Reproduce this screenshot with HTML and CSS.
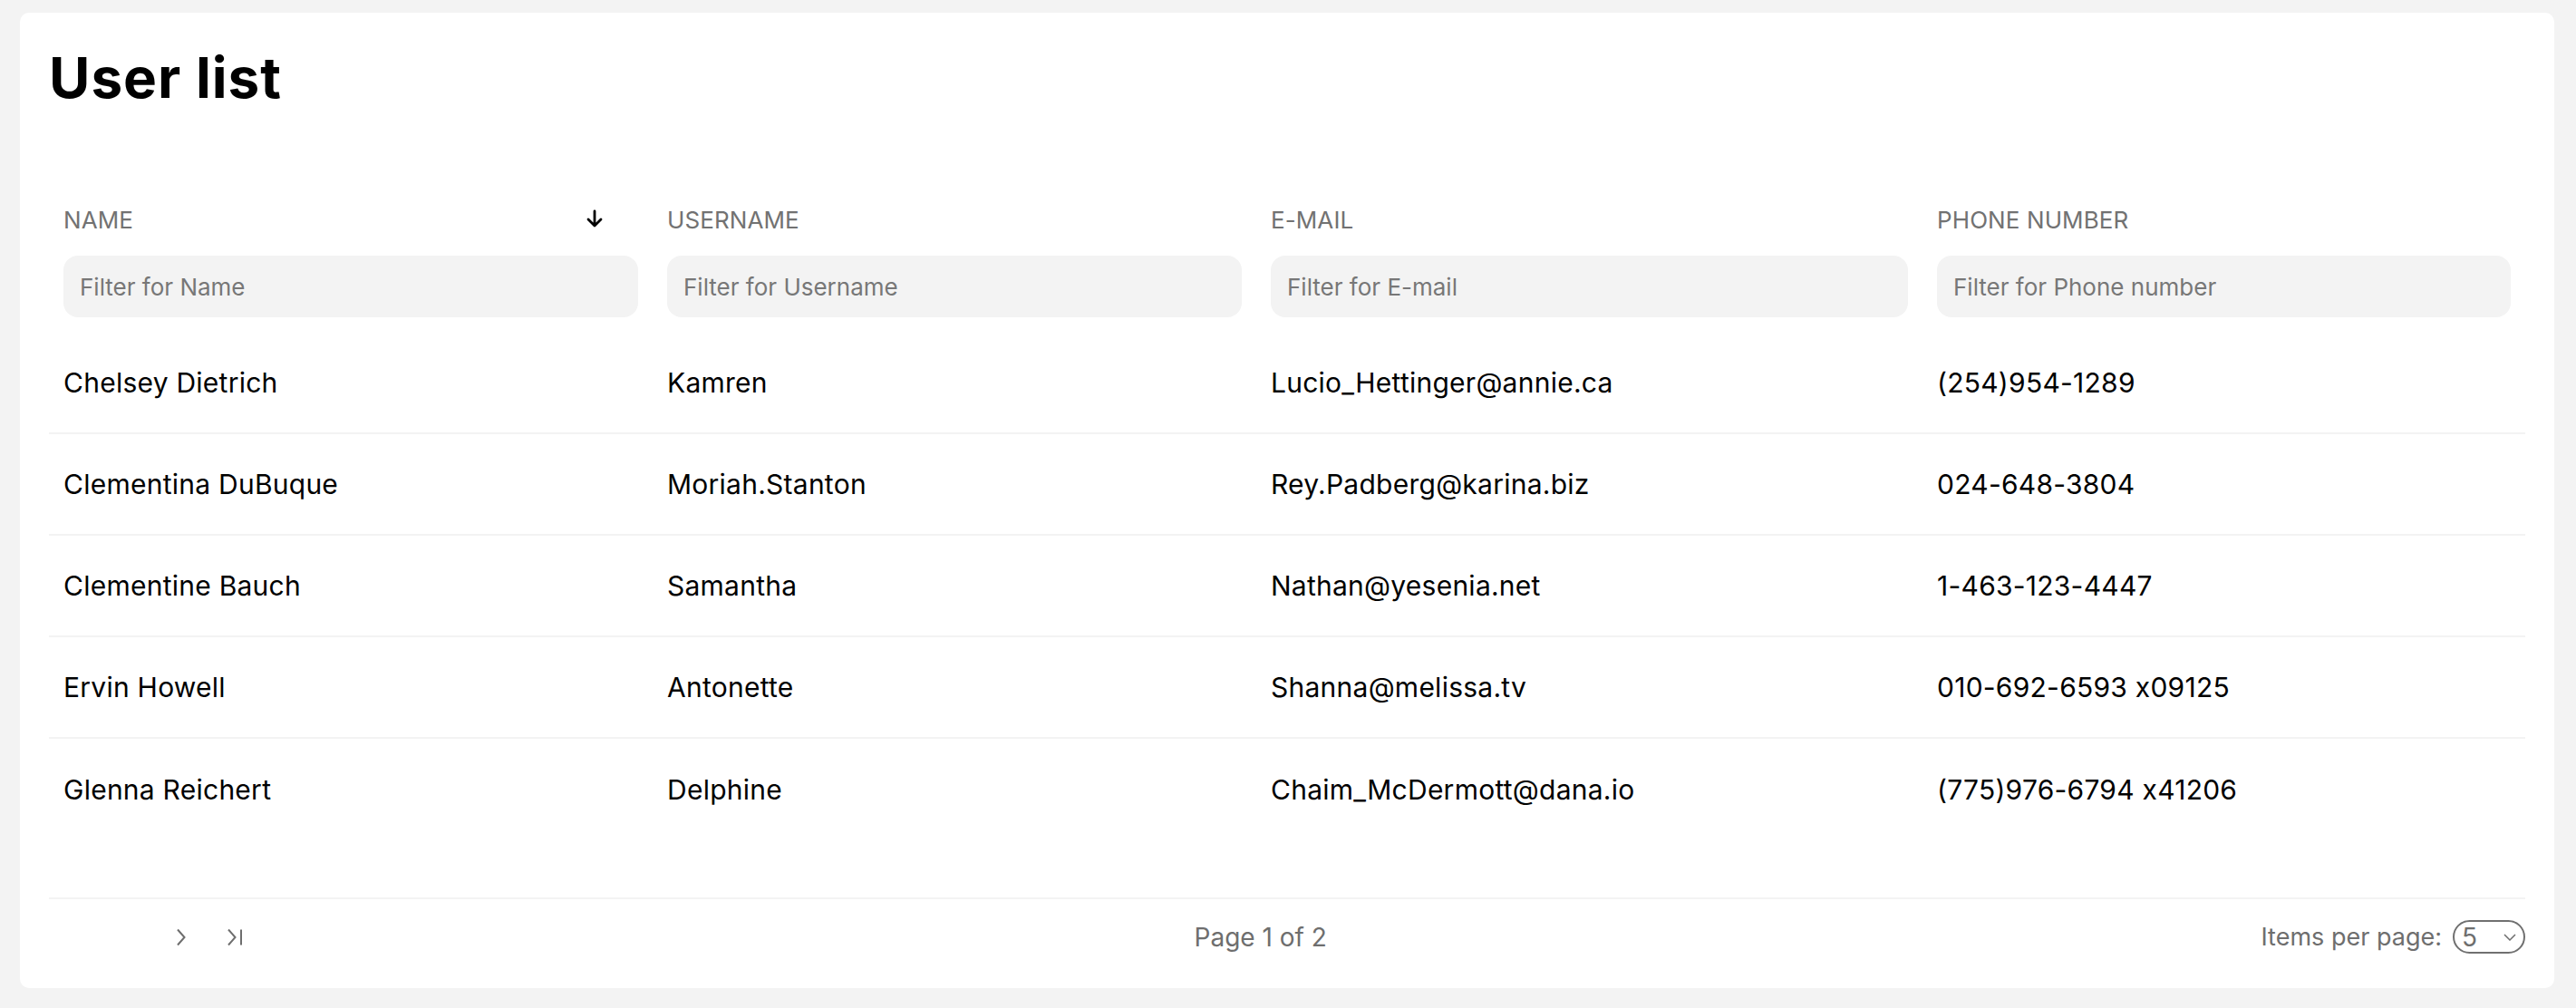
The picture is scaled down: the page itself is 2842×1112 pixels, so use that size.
FILE: index.html
```html
<!DOCTYPE html>
<html lang="en">
<head>
<meta charset="utf-8">
<title>User list</title>
<link rel="stylesheet" href="styles.css">
</head>
<body>
<div class="page">
  <section class="card">
    <h1 class="title">User list</h1>
    <table class="users">
      <colgroup>
        <col class="c-name"><col class="c-user"><col class="c-mail"><col class="c-phone">
      </colgroup>
      <thead>
        <tr>
          <th>
            <div class="th-label"><span>NAME</span>
              <svg class="sort" width="22" height="21" viewBox="0 0 22 21"><path d="M11 2v16M4 11l7 7 7-7" fill="none" stroke="#000" stroke-width="2.8" stroke-linecap="round" stroke-linejoin="round"/></svg>
            </div>
            <input class="filter" type="text" placeholder="Filter for Name">
          </th>
          <th>
            <div class="th-label"><span>USERNAME</span></div>
            <input class="filter" type="text" placeholder="Filter for Username">
          </th>
          <th>
            <div class="th-label"><span>E-MAIL</span></div>
            <input class="filter" type="text" placeholder="Filter for E-mail">
          </th>
          <th>
            <div class="th-label"><span>PHONE NUMBER</span></div>
            <input class="filter" type="text" placeholder="Filter for Phone number">
          </th>
        </tr>
      </thead>
      <tbody>
        <tr><td>Chelsey Dietrich</td><td>Kamren</td><td>Lucio_Hettinger@annie.ca</td><td>(254)954-1289</td></tr>
        <tr><td>Clementina DuBuque</td><td>Moriah.Stanton</td><td>Rey.Padberg@karina.biz</td><td>024-648-3804</td></tr>
        <tr><td>Clementine Bauch</td><td>Samantha</td><td>Nathan@yesenia.net</td><td>1-463-123-4447</td></tr>
        <tr><td>Ervin Howell</td><td>Antonette</td><td>Shanna@melissa.tv</td><td>010-692-6593 x09125</td></tr>
        <tr><td>Glenna Reichert</td><td>Delphine</td><td>Chaim_McDermott@dana.io</td><td>(775)976-6794 x41206</td></tr>
      </tbody>
    </table>
    <footer class="pager">
      <div class="pager-nav">
        <button class="nav-btn is-hidden" aria-label="First page"><svg width="19" height="20" viewBox="0 0 19 20"><path d="M17 1.5l-7.5 8.5 7.5 8.5M3 1.5v17" fill="none" stroke="currentColor" stroke-width="2"/></svg></button>
        <button class="nav-btn is-hidden" aria-label="Previous page"><svg width="12" height="20" viewBox="0 0 12 20"><path d="M10 1.5l-7.5 8.5 7.5 8.5" fill="none" stroke="currentColor" stroke-width="2"/></svg></button>
        <button class="nav-btn" aria-label="Next page"><svg width="12" height="20" viewBox="0 0 12 20"><path d="M2 1.5l7.5 8.5-7.5 8.5" fill="none" stroke="currentColor" stroke-width="2"/></svg></button>
        <button class="nav-btn" aria-label="Last page"><svg width="19" height="20" viewBox="0 0 19 20"><path d="M2 1.5l7.5 8.5-7.5 8.5M16 1.5v17" fill="none" stroke="currentColor" stroke-width="2"/></svg></button>
      </div>
      <div class="pager-info">Page 1 of 2</div>
      <div class="pager-size">
        <span>Items per page:</span>
        <div class="size-select"><span>5</span><svg width="14" height="8" viewBox="0 0 14 8"><path d="M1 1l6 6 6-6" fill="none" stroke="currentColor" stroke-width="1.5"/></svg></div>
      </div>
    </footer>
  </section>
</div>
</body>
</html>
```
FILE: styles.css
```css
* { box-sizing: border-box; }

html, body {
  margin: 0;
  background: #f3f3f3;
}

body {
  font-family: Inter, "Noto Sans", "Liberation Sans", sans-serif;
  font-feature-settings: "calt" 0;
  color: #000;
}

.page {
  padding: 14px 24px 22px 22px;
}

.card {
  background: #fff;
  border-radius: 10px;
  padding: 34px 32px 38px;
}

.title {
  margin: 0;
  font-size: 62px;
  line-height: 75px;
  font-weight: 700;
  letter-spacing: 1px;
}

.users {
  width: 100%;
  table-layout: fixed;
  border-collapse: collapse;
  margin-top: 104px;
}

.c-name { width: 666px; }
.c-user { width: 666px; }
.c-mail { width: 735px; }
.c-phone { width: 665px; }

.users th {
  padding: 0 16px 16px;
  text-align: left;
  font-weight: 400;
  vertical-align: top;
}

.th-label {
  display: flex;
  align-items: center;
  justify-content: space-between;
  height: 31px;
  margin-bottom: 24px;
  font-size: 26px;
  line-height: 31px;
  color: #727272;
  letter-spacing: 0.1px;
}

.sort {
  margin-right: 37px;
  margin-top: -3px;
}

.filter {
  display: block;
  width: 100%;
  height: 68px;
  border: none;
  border-radius: 16px;
  background: #f3f3f3;
  padding: 0 18px;
  font-family: inherit;
  font-size: 26px;
  color: #000;
  outline: none;
}

.filter::placeholder {
  color: #777;
}

.users td {
  height: 112px;
  padding: 0 16px;
  font-size: 30px;
  letter-spacing: 0.25px;
  border-bottom: 2px solid #f3f3f3;
  vertical-align: middle;
  white-space: nowrap;
}

.users tbody tr:last-child td {
  border-bottom: none;
}

.pager {
  margin-top: 64px;
  border-top: 2px solid #f3f3f3;
  padding-top: 23px;
  display: flex;
  align-items: center;
  justify-content: space-between;
  color: #6e6e6e;
  font-size: 28px;
}

.pager-nav {
  display: flex;
  gap: 3px;
}

.nav-btn {
  width: 56px;
  height: 37px;
  display: flex;
  align-items: center;
  justify-content: center;
  border: none;
  background: none;
  padding: 0;
  color: #6e6e6e;
}

.nav-btn.is-hidden {
  visibility: hidden;
}

.pager-size {
  display: flex;
  align-items: center;
  gap: 12px;
  font-size: 27px;
}

.size-select {
  width: 80px;
  height: 37px;
  border: 2px solid #707070;
  border-radius: 19px;
  display: flex;
  align-items: center;
  justify-content: space-between;
  padding: 0 8px 0 8px;
  line-height: 1;
  font-size: 28px;
}
```
